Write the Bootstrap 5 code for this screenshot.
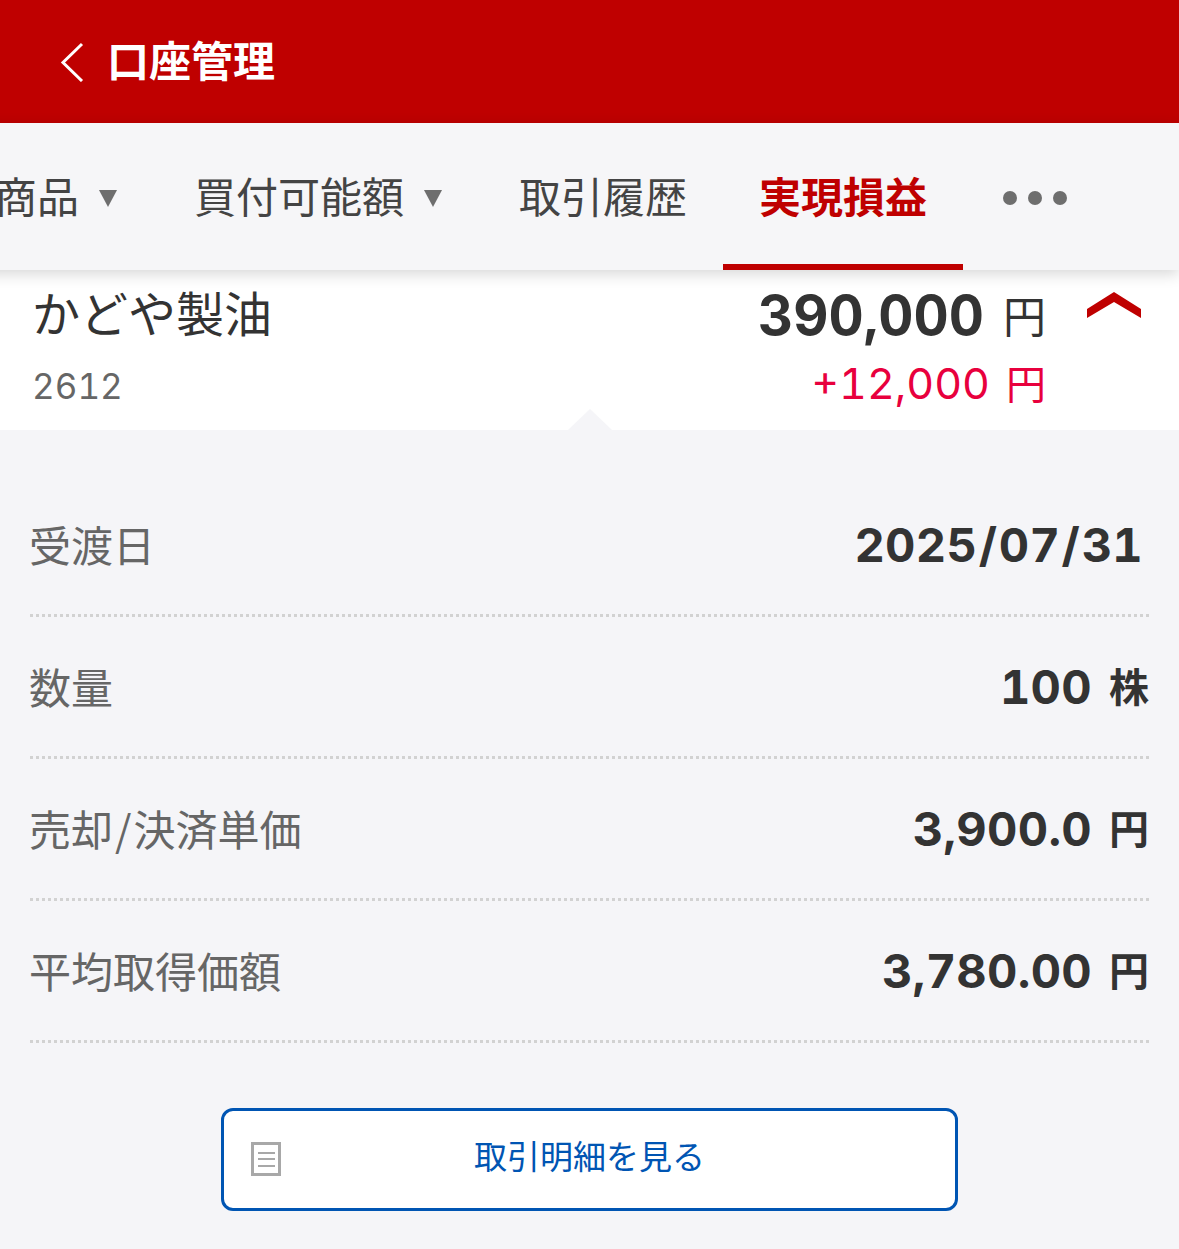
<!DOCTYPE html>
<html lang="ja">
<head>
    <meta charset="UTF-8">
    <meta name="viewport" content="width=device-width, initial-scale=1.0">
    <title>口座管理</title>
    <link href="https://cdn.jsdelivr.net/npm/bootstrap@5.3.0/dist/css/bootstrap.min.css" rel="stylesheet">
    <style>
        body {
            background: #f5f5f8;
            font-family: "Liberation Sans", "Noto Sans CJK JP", sans-serif;
            color: #333;
            overflow: hidden;
        }
        .top-bar {
            height: 123px;
            background: #bf0000;
            padding-left: 60px;
            gap: 21px;
        }
        .top-title {
            font-size: 42px;
            font-weight: 700;
            color: #fff;
            line-height: 1;
            padding-top: 2px;
        }
        .tab-bar {
            height: 147px;
            background: #f6f6f8;
            box-shadow: 0 4px 14px rgba(0, 0, 0, .16);
            position: relative;
            z-index: 2;
            margin-left: -125px;
        }
        .tab-item {
            font-size: 42px;
            line-height: 1;
            color: #444;
            padding: 10px 41px 0 36px;
            gap: 20px;
            white-space: nowrap;
            border-bottom: 6px solid transparent;
        }
        .tab-item.is-plain {
            padding-right: 36px;
        }
        .tab-item.is-active {
            color: #bf0000;
            font-weight: 700;
            border-bottom-color: #bf0000;
            padding-right: 36px;
        }
        .tab-arrow {
            width: 18px;
            height: 18px;
        }
        .tab-dots {
            padding: 2px 0 0 40px;
            gap: 11px;
        }
        .tab-dots span {
            width: 14px;
            height: 14px;
            border-radius: 50%;
            background: #6e6e6e;
        }
        .stock-card {
            height: 160px;
            background: #fff;
            padding: 16px 38px 0 32px;
        }
        .stock-name {
            font-size: 48px;
            line-height: 60px;
            color: #333;
        }
        .stock-code {
            font-family: Inter, "Noto Sans CJK JP", sans-serif;
            font-variant-numeric: tabular-nums;
            font-size: 35px;
            line-height: 40px;
            color: #666;
            margin-top: 20px;
        }
        .stock-amount {
            font-family: Inter, "Noto Sans CJK JP", sans-serif;
            font-variant-numeric: tabular-nums;
            font-size: 54.5px;
            line-height: 58px;
            font-weight: 700;
        }
        .unit-thin {
            font-size: 43px;
            font-weight: 400;
            margin-left: 19px;
            vertical-align: 2px;
        }
        .stock-gain {
            font-family: Inter, "Noto Sans CJK JP", sans-serif;
            font-variant-numeric: tabular-nums;
            font-size: 43px;
            line-height: 50px;
            color: #e8003d;
            margin-top: 12px;
        }
        .unit-gain {
            font-size: 40px;
            margin-left: 16px;
        }
        .stock-toggle {
            width: 54px;
            height: 27px;
            margin-left: 41px;
            margin-top: 6px;
        }
        .detail-panel {
            position: relative;
            padding: 45px 30px 0;
        }
        .detail-panel::before {
            content: "";
            position: absolute;
            left: 568px;
            top: -21px;
            border-left: 22px solid transparent;
            border-right: 22px solid transparent;
            border-bottom: 21px solid #f5f5f8;
        }
        .detail-row {
            height: 142px;
            border-bottom: 3px dotted #d2d2d2;
        }
        .detail-label {
            font-family: "Noto Sans CJK JP", sans-serif;
            font-size: 42px;
            line-height: 1;
            color: #666;
            margin-left: -1px;
            padding-bottom: 2px;
        }
        .slash-gap {
            margin: 0 2px;
        }
        .detail-value {
            font-family: Inter, "Noto Sans CJK JP", sans-serif;
            font-variant-numeric: tabular-nums;
            font-size: 47px;
            line-height: 1;
            font-weight: 700;
            letter-spacing: .3px;
        }
        .detail-value.is-date {
            padding-right: 6px;
        }
        .date-slash {
            margin: 0 1.5px;
        }
        .detail-value .unit-bold {
            font-size: 40px;
            margin-left: 17px;
            letter-spacing: 0;
            vertical-align: 2px;
        }
        .statement-btn {
            width: 737px;
            height: 103px;
            margin: 65px auto 0;
            background: #fff;
            border: 3px solid #0055b3;
            border-radius: 12px;
            color: #0055b3;
            font-size: 33px;
            padding-bottom: 3px;
            position: relative;
        }
        .statement-icon {
            position: absolute;
            left: 27px;
            top: 31px;
            width: 32px;
            height: 35px;
        }
    </style>
</head>
<body>
    <header class="top-bar d-flex align-items-center">
        <svg width="26" height="40" viewBox="0 0 26 40" fill="none" stroke="#fff" stroke-width="3">
            <path d="M22 2 L3 20.5 L22 39"/>
        </svg>
        <div class="top-title">口座管理</div>
    </header>

    <nav class="tab-bar d-flex align-items-stretch">
        <div class="tab-item d-flex align-items-center">保有商品
            <svg class="tab-arrow" viewBox="0 0 18 18"><path d="M0 0H18L9 17Z" fill="#6e6e6e"/></svg>
        </div>
        <div class="tab-item d-flex align-items-center">買付可能額
            <svg class="tab-arrow" viewBox="0 0 18 18"><path d="M0 0H18L9 17Z" fill="#6e6e6e"/></svg>
        </div>
        <div class="tab-item is-plain d-flex align-items-center">取引履歴</div>
        <div class="tab-item is-active d-flex align-items-center">実現損益</div>
        <div class="tab-dots d-flex align-items-center"><span></span><span></span><span></span></div>
    </nav>

    <section class="stock-card d-flex">
        <div class="flex-grow-1">
            <div class="stock-name">かどや製油</div>
            <div class="stock-code">2612</div>
        </div>
        <div class="text-end">
            <div class="stock-amount">390,000<span class="unit-thin">円</span></div>
            <div class="stock-gain">+12,000<span class="unit-gain">円</span></div>
        </div>
        <svg class="stock-toggle" viewBox="0 0 54 27"><path d="M0 17 L27 0 L54 17 V26 L27 10 L0 26Z" fill="#bf0000"/></svg>
    </section>

    <section class="detail-panel">
        <div class="detail-row d-flex justify-content-between align-items-center">
            <div class="detail-label">受渡日</div>
            <div class="detail-value is-date">2025<span class="date-slash">/</span>07<span class="date-slash">/</span>31</div>
        </div>
        <div class="detail-row d-flex justify-content-between align-items-center">
            <div class="detail-label">数量</div>
            <div class="detail-value">100<span class="unit-bold">株</span></div>
        </div>
        <div class="detail-row d-flex justify-content-between align-items-center">
            <div class="detail-label">売却<span class="slash-gap">/</span>決済単価</div>
            <div class="detail-value">3,900.0<span class="unit-bold">円</span></div>
        </div>
        <div class="detail-row d-flex justify-content-between align-items-center">
            <div class="detail-label">平均取得価額</div>
            <div class="detail-value">3,780.00<span class="unit-bold">円</span></div>
        </div>
        <div class="statement-btn d-flex align-items-center justify-content-center">
            <svg class="statement-icon" viewBox="0 0 32 35" fill="none" stroke="#a8a8a8">
                <rect x="1.5" y="1.5" width="27" height="31" stroke-width="3"/>
                <path d="M7 11H24M7 17H24M7 24H24" stroke-width="2"/>
            </svg>
            取引明細を見る
        </div>
    </section>
    <script src="https://cdn.jsdelivr.net/npm/bootstrap@5.3.0/dist/js/bootstrap.bundle.min.js"></script>
</body>
</html>
